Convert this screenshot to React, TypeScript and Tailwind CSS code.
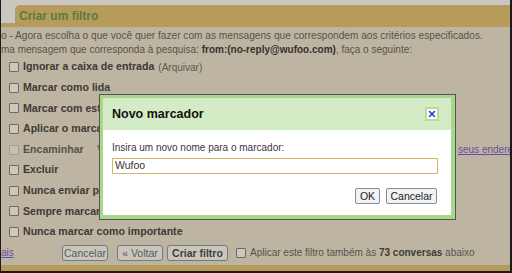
import { X } from 'lucide-react';

const rows = [
  { label: 'Ignorar a caixa de entrada', extra: '(Arquivar)' },
  { label: 'Marcar como lida' },
  { label: 'Marcar com estrela' },
  { label: 'Aplicar o marcador:' },
  { label: 'Encaminhar', disabled: true },
  { label: 'Excluir' },
  { label: 'Nunca enviar para o spam' },
  { label: 'Sempre marcar como importante' },
  { label: 'Nunca marcar como importante' },
];

const Box = ({ disabled }: { disabled?: boolean }) => (
  <span
    className={
      disabled
        ? 'inline-block shrink-0 w-[10px] h-[10px] rounded-[1px] border border-[#a19d92] bg-[#c6c0b1]'
        : 'inline-block shrink-0 w-[10px] h-[10px] rounded-[1px] border border-[#6d6a63] bg-[#cdc8bb]'
    }
  ></span>
);

const PageButton = ({ children, w, bold }: { children: React.ReactNode; w: string; bold?: boolean }) => (
  <button
    className={
      (bold ? 'font-bold text-[#3c3f42] ' : 'text-[#535d68] ') +
      w +
      ' h-[16px] border border-[#6f7b86] rounded-[3px] bg-[#cbc6ba] text-[10.5px] leading-none'
    }
  >
    {children}
  </button>
);

export default function App() {
  return (
    <div className="relative w-[512px] h-[273px] overflow-hidden flex flex-col bg-[#bdb5a1] border-l border-r-2 border-b-2 border-[#1b1b1b] font-['Liberation_Sans',Arial,sans-serif]">
      {/* header */}
      <div className="bg-[#c8c7c2] pt-[5px]">
        <div className="flex h-[18px]">
          <div className="w-[14px]"></div>
          <div className="flex-1 bg-[#b79b5b] rounded-tl-[5px] pl-[4px] pt-[4px] text-[12px] leading-[14px] font-bold text-[#5a7b3d]">
            Criar um filtro
          </div>
        </div>
        <div className="h-[4px] bg-[#b79b5b]"></div>
      </div>

      {/* content */}
      <div className="flex-1 pt-[2px] text-[#56534b] whitespace-nowrap">
        <div className="text-[10.15px] leading-[14px]">
          o - Agora escolha o que você quer fazer com as mensagens que correspondem aos critérios especificados.
        </div>
        <div className="text-[10px] leading-[14px]">
          ma mensagem que corresponda à pesquisa: <b className="text-[#34322d]">from:(no-reply@wufoo.com)</b>, faça o
          seguinte:
        </div>

        {rows.map((r, i) => (
          <div key={i} className="h-[20.6px] flex items-center pl-[8px] gap-[4px]">
            <Box disabled={r.disabled} />
            <span
              className={
                r.disabled
                  ? 'inline-block shrink-0 w-[70px] text-[10.6px] font-bold text-[#55524b]'
                  : 'shrink-0 text-[10.6px] font-bold text-[#3d3a35]'
              }
            >
              {r.label}
            </span>
            {r.extra && <span className="shrink-0 text-[10px] text-[#5b5850]">{r.extra}</span>}
            {r.disabled && (
              <>
                <span className="inline-block shrink-0 w-[357px] text-[10px] text-[#56534b]">V</span>
                <span className="shrink-0 text-[10px] text-[#6a4ea6] underline">seus endereços</span>
              </>
            )}
          </div>
        ))}

        <div className="mt-[2px] h-[17px] flex items-center">
          <span className="text-[10px] text-[#6a4ea6] underline w-[61px]">ais</span>
          <div className="flex items-center">
            <PageButton w="w-[46px]">Cancelar</PageButton>
            <span className="w-[9px]"></span>
            <PageButton w="w-[46px]">« Voltar</PageButton>
            <span className="w-[4px]"></span>
            <PageButton w="w-[61px]" bold>
              Criar filtro
            </PageButton>
          </div>
          <span className="ml-[8px] mr-[4px] flex">
            <Box />
          </span>
          <span className="text-[10px] text-[#56534b]">
            Aplicar este filtro também às <b className="text-[#3d3a35]">73 conversas</b> abaixo
          </span>
        </div>
      </div>

      <div className="h-[6px] bg-[#b79b5b]"></div>

      {/* dialog */}
      <div className="absolute left-[98px] top-[94px] w-[357px] h-[126px] border border-[#4f5a48] bg-[#a8d68e] pt-[3px] pl-[3px] pr-[4px] pb-[4px] flex flex-col">
        <div className="h-[32px] bg-[#d3ecc6] flex items-center justify-between pl-[9px] pr-[12px]">
          <span className="text-[12.5px] font-bold text-[#111]">Novo marcador</span>
          <span className="w-[14px] h-[14px] bg-white border-2 border-[#b4dd9d] flex items-center justify-center">
            <X size={10} strokeWidth={3.5} color="#2b2bd0" />
          </span>
        </div>
        <div className="flex-1 bg-white pl-[9px] pr-[13px] pt-[11px] flex flex-col">
          <div className="text-[10px] leading-[14px] text-[#3e3346]">Insira um novo nome para o marcador:</div>
          <div className="mt-[3px] h-[16px] border border-[#d6b468] flex items-center pl-[2px] text-[10.5px] text-[#3a3340]">
            Wufoo
          </div>
          <div className="mt-[14px] flex justify-end gap-[6px] pr-[1px]">
            <button className="h-[16px] w-[25px] border border-[#7a8ea2] rounded-[2px] bg-[#f2f2f2] text-[10.5px] leading-none text-[#222]">
              OK
            </button>
            <button className="h-[16px] w-[51px] border border-[#7a8ea2] rounded-[2px] bg-[#f2f2f2] text-[10.5px] leading-none text-[#222]">
              Cancelar
            </button>
          </div>
        </div>
      </div>
    </div>
  );
}
